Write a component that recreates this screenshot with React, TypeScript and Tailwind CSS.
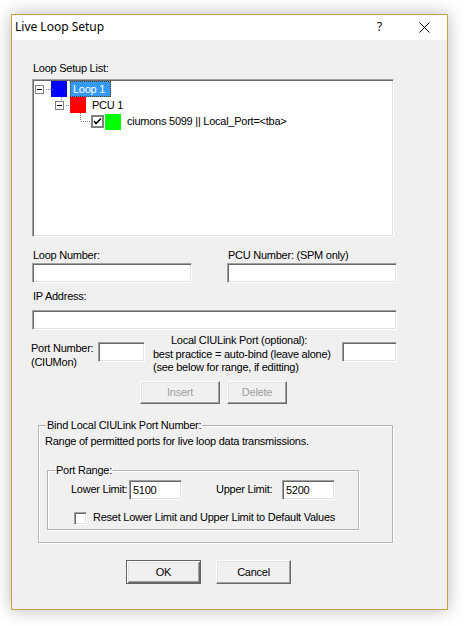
import React from "react";

const FONT = "font-['Liberation_Sans',Arial,sans-serif] text-[11px] leading-[13px] tracking-[-0.25px] text-black";
const SUNKEN =
  "bg-white border border-t-[#a0a0a0] border-l-[#a0a0a0] border-b-white border-r-white shadow-[inset_1px_1px_0_#696969,inset_-1px_-1px_0_#e3e3e3]";
const RAISED =
  "bg-[#f0f0f0] border border-t-white border-l-white border-b-[#696969] border-r-[#696969] shadow-[inset_-1px_-1px_0_#a0a0a0,inset_1px_1px_0_#e3e3e3]";

function MinusBox() {
  return (
    <span className="w-[9px] h-[9px] border border-[#808080] bg-white flex items-center justify-center shrink-0">
      <span className="w-[5px] h-px bg-black" />
    </span>
  );
}

export default function App() {
  return (
    <div className={`w-[464px] h-[626px] bg-white pt-[14px] pl-[11px] ${FONT}`}>
      <div className="w-[437px] h-[596px] border border-[#c9a043] bg-[#f0f0f0] shadow-[0_0_16px_rgba(0,0,0,0.28)] flex flex-col">
        {/* Title bar */}
        <div className="h-[25px] bg-white flex shrink-0">
          <div className="pl-[3px] pt-[4px] font-['Noto_Sans',sans-serif] text-[12px] leading-[16px] tracking-normal">
            Live Loop Setup
          </div>
          <div className="ml-auto flex">
            <div className="w-[45px] h-[25px] flex justify-center pt-[4px] font-['Noto_Sans',sans-serif] text-[12px] leading-[16px] tracking-normal">
              ?
            </div>
            <div className="w-[45px] h-[25px] flex items-center justify-center">
              <svg width="11" height="11" viewBox="0 0 11 11">
                <path d="M0.5 0.5 L10.5 10.5 M10.5 0.5 L0.5 10.5" stroke="#000" strokeWidth="1" fill="none" />
              </svg>
            </div>
          </div>
        </div>

        {/* Content */}
        <div className="pl-[20px] flex flex-col">
          <div className="mt-[22px] ml-px h-[13px]">Loop Setup List:</div>

          {/* Tree */}
          <div className={`mt-[4px] w-[362px] h-[158px] ${SUNKEN} relative`}>
            <svg className="absolute left-[-1px] top-[-1px]" width="362" height="158" viewBox="32 79 362 158">
              <g stroke="#808080" strokeWidth="1" strokeDasharray="1 1" fill="none">
                <line x1="46" y1="89.5" x2="53" y2="89.5" />
                <line x1="61.5" y1="97" x2="61.5" y2="101" />
                <line x1="66" y1="105.5" x2="72" y2="105.5" />
                <line x1="80.5" y1="113" x2="80.5" y2="121" />
                <line x1="81" y1="121.5" x2="93" y2="121.5" />
              </g>
            </svg>
            <div className="flex flex-col pt-px">
              <div className="h-[16px] flex items-center">
                <span className="ml-[2px]"><MinusBox /></span>
                <span className="ml-[7px] w-[16px] h-[16px] bg-[#0000ff]" />
                <span className="ml-[3px] h-[16px] w-[41px] bg-[#3399ff] text-white outline outline-1 outline-dotted outline-[#5a3a00] -outline-offset-1 flex items-center pl-[3px]">
                  Loop 1
                </span>
              </div>
              <div className="h-[16px] flex items-center">
                <span className="ml-[22px]"><MinusBox /></span>
                <span className="ml-[6px] w-[16px] h-[16px] bg-[#ff0000]" />
                <span className="ml-[6px]">PCU 1</span>
              </div>
              <div className="h-[17px] flex items-center">
                <span className="ml-[58px] w-[13px] h-[13px] bg-white border-2 border-[#808080] flex items-center justify-center">
                  <svg width="9" height="9" viewBox="0 0 9 9">
                    <path d="M1 4 L3 6.5 L8 1.5" stroke="#000" strokeWidth="1.6" fill="none" />
                  </svg>
                </span>
                <span className="ml-px w-[16px] h-[16px] bg-[#00ff00]" />
                <span className="ml-[6px]">ciumons 5099 || Local_Port=&lt;tba&gt;</span>
              </div>
            </div>
          </div>

          {/* Loop / PCU number */}
          <div className="mt-[12px] flex">
            <div className="w-[160px] flex flex-col">
              <div className="ml-px h-[13px]">Loop Number:</div>
              <div className={`mt-px h-[20px] ${SUNKEN}`} />
            </div>
            <div className="ml-[35px] w-[170px] flex flex-col">
              <div className="ml-px h-[13px]">PCU Number: (SPM only)</div>
              <div className={`mt-px h-[20px] ${SUNKEN}`} />
            </div>
          </div>

          <div className="mt-[7px] ml-px h-[13px]">IP Address:</div>
          <div className={`mt-[7px] w-[365px] h-[20px] ${SUNKEN}`} />

          {/* Port row */}
          <div className="mt-[4px] h-[41px] flex items-start">
            <div className="-ml-px w-[67px] mt-[7px] leading-[14px]">
              <div>Port Number:</div>
              <div>(CIUMon)</div>
            </div>
            <div className={`mt-[8px] w-[47px] h-[20px] ${SUNKEN}`} />
            <div className="ml-[8px] w-[189px] leading-[13.5px]">
              <div className="ml-[18px]">Local CIULink Port (optional):</div>
              <div>best practice = auto-bind (leave alone)</div>
              <div>(see below for range, if editting)</div>
            </div>
            <div className={`mt-[8px] w-[55px] h-[20px] ${SUNKEN}`} />
          </div>

          {/* Insert / Delete */}
          <div className="mt-[6px] flex">
            <div className={`ml-[108px] w-[80px] h-[23px] ${RAISED} flex items-center justify-center text-[#a0a0a0]`}>
              Insert
            </div>
            <div className={`ml-[7px] w-[60px] h-[23px] ${RAISED} flex items-center justify-center text-[#a0a0a0]`}>
              Delete
            </div>
          </div>

          {/* Bind group */}
          <fieldset className="mt-[15px] ml-[6px] w-[355px] h-[124px] border border-[#b4b4b4] shadow-[1px_1px_0_#fff,inset_1px_1px_0_#fff] p-0 m-0 min-w-0">
            <legend className="ml-[7px] px-px h-[13px]">Bind Local CIULink Port Number:</legend>
            <div className="mt-[3px] ml-[6px]">Range of permitted ports for live loop data transmissions.</div>
            <fieldset className="mt-[16px] ml-[8px] w-[312px] h-[66px] border border-[#b4b4b4] shadow-[1px_1px_0_#fff,inset_1px_1px_0_#fff] p-0 m-0 min-w-0">
              <legend className="ml-[7px] px-px h-[13px]">Port Range:</legend>
              <div className="mt-[3px] flex items-start">
                <div className="ml-[23px] w-[58px] mt-[3px]">Lower Limit:</div>
                <div className={`w-[53px] h-[20px] ${SUNKEN} pl-[3px] pt-[3px]`}>5100</div>
                <div className="ml-[34px] w-[66px] mt-[3px]">Upper Limit:</div>
                <div className={`w-[53px] h-[20px] ${SUNKEN} pl-[3px] pt-[3px]`}>5200</div>
              </div>
              <div className="mt-[12px] flex items-start">
                <div className={`ml-[26px] w-[13px] h-[13px] ${SUNKEN}`} />
                <div className="ml-[6px] -mt-px">Reset Lower Limit and Upper Limit to Default Values</div>
              </div>
            </fieldset>
          </fieldset>

          {/* OK / Cancel */}
          <div className="mt-[17px] flex">
            <div className="ml-[94px] w-[75px] h-[24px] border border-[#646464] bg-[#f0f0f0] shadow-[inset_1px_1px_0_#fff,inset_-1px_-1px_0_#696969,inset_2px_2px_0_#e3e3e3,inset_-2px_-2px_0_#a0a0a0] flex items-center justify-center">
              OK
            </div>
            <div className={`ml-[15px] w-[75px] h-[24px] ${RAISED} flex items-center justify-center`}>
              Cancel
            </div>
          </div>
        </div>
      </div>
    </div>
  );
}
